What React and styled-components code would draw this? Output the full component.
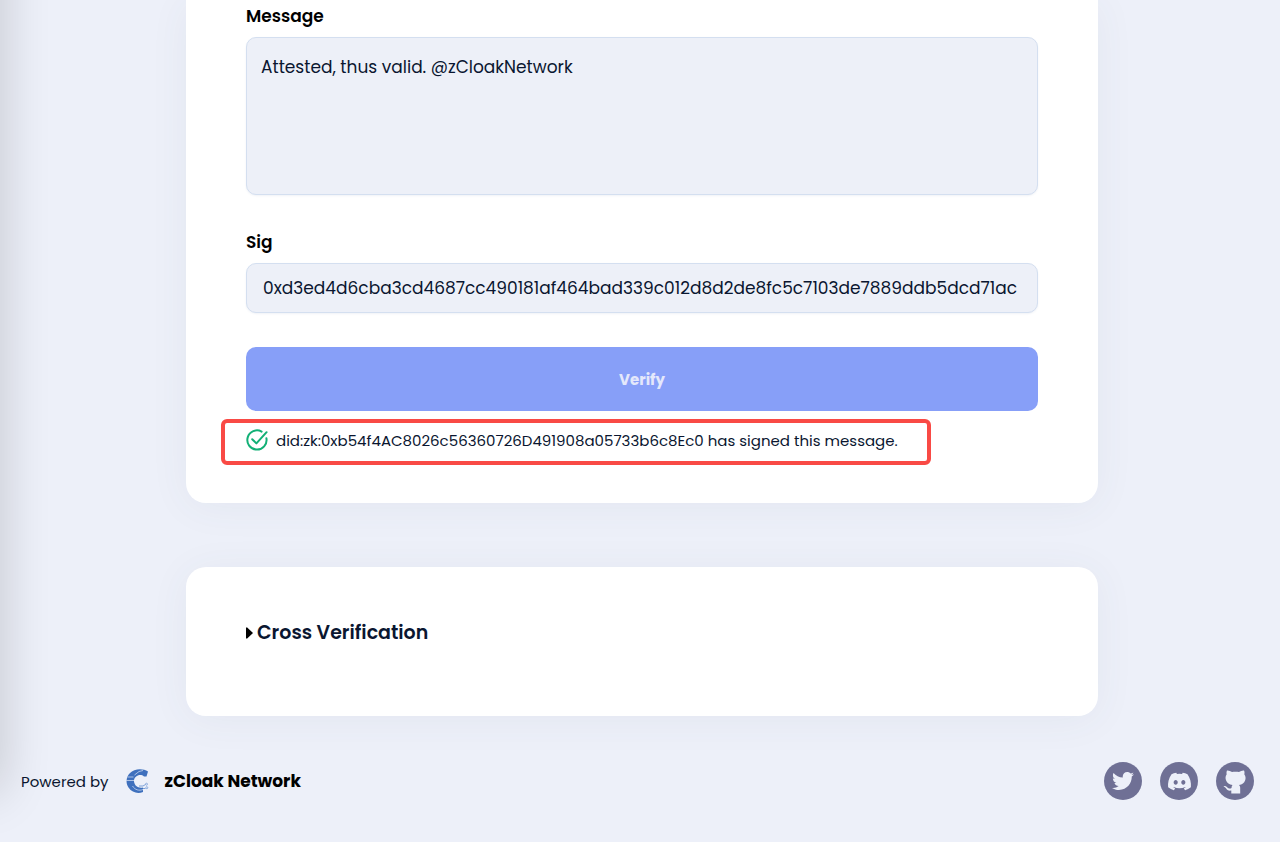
import React from "react";
import styled, { createGlobalStyle } from "styled-components";
import { FaTwitter, FaDiscord } from "react-icons/fa";

const GlobalStyle = createGlobalStyle`
  *, *::before, *::after { box-sizing: border-box; }
  body {
    margin: 0;
    background: #edf0f9;
    color: #0a1630;
    font-family: Poppins, Inter, "Liberation Sans", sans-serif;
    font-size: 16px;
  }
`;

const Page = styled.div`
  position: relative;
  overflow: hidden;
`;

const DrawerShadow = styled.div`
  position: absolute;
  left: -40px;
  top: -60px;
  bottom: 50px;
  width: 40px;
  box-shadow: 0 0 50px rgba(0, 0, 0, 0.2);
`;

const Main = styled.main`
  display: flex;
  flex-direction: column;
  gap: 64px;
  padding: 0 182px 0 186px;
`;

const Card = styled.section`
  background: #fff;
  border-radius: ${(p) => (p.$continued ? "0 0 20px 20px" : "20px")};
  padding: ${(p) => (p.$continued ? "1px 60px 38px" : "51px 60px 68px")};
  box-shadow: 0 4px 40px rgba(60, 80, 110, 0.06);
`;

const Field = styled.div`
  display: flex;
  flex-direction: column;
  margin-bottom: ${(p) => (p.$last ? "34px" : "32px")};
`;

const Label = styled.label`
  color: #000;
  font-size: 17px;
  font-weight: 600;
  line-height: 30px;
  margin-bottom: 6px;
`;

const fieldStyle = `
  width: 100%;
  background: #edf0f8;
  color: #0a1630;
  border: 1px solid #d4dff0;
  border-radius: 10px;
  box-shadow: 0 1px 2px rgba(60, 90, 150, 0.08);
  font-family: inherit;
  font-size: 17px;
  outline: none;
`;

const TextArea = styled.textarea`
  ${fieldStyle}
  display: block;
  height: 158px;
  padding: 16px 14px;
  line-height: 26px;
  resize: none;
`;

const TextInput = styled.input`
  ${fieldStyle}
  height: 50px;
  padding: 0 16px;
`;

const VerifyButton = styled.button`
  display: block;
  width: 100%;
  height: 64px;
  border: 0;
  border-radius: 10px;
  background: #879ff8;
  color: #e4e8fb;
  font-family: inherit;
  font-size: 15px;
  font-weight: 700;
`;

const Result = styled.p`
  display: flex;
  align-items: center;
  gap: 8px;
  width: 710px;
  max-width: calc(100% + 50px);
  height: 46px;
  margin: 8px 0 0 -25px;
  padding: 0 20px 4px 21px;
  border: 4px solid #f94a45;
  border-radius: 6px;
  font-size: 15px;
  white-space: nowrap;
`;

const Summary = styled.summary`
  display: flex;
  align-items: center;
  gap: 4px;
  font-size: 19px;
  font-weight: 600;
  line-height: 30px;
  list-style: none;
  &::-webkit-details-marker { display: none; }
`;

const Footer = styled.footer`
  display: flex;
  align-items: center;
  justify-content: space-between;
  padding: 46px 26px 42px 21px;
`;

const Powered = styled.div`
  display: flex;
  align-items: center;
  gap: 17px;
  font-size: 15px;
`;

const Brand = styled.a`
  display: flex;
  align-items: center;
  gap: 16px;
  color: #000;
  font-size: 17px;
  font-weight: 700;
  text-decoration: none;
`;

const Socials = styled.nav`
  display: flex;
  gap: 18px;
`;

const SocialLink = styled.a`
  display: flex;
  align-items: center;
  justify-content: center;
  width: 38px;
  height: 38px;
  border-radius: 50%;
  background: #6f7095;
  color: #edf0f9;
`;

const CheckIcon = () => (
  <svg width="22" height="22" viewBox="0 0 22 22" fill="none" stroke="#12b076" strokeWidth="2" strokeLinecap="round" strokeLinejoin="round" aria-hidden="true">
    <path d="M15.6 2.6A9.6 9.6 0 1 0 20.4 9.3" />
    <path d="M6.2 10.2l4.2 4.2L20.6 3.2" />
  </svg>
);

const ZCloakLogo = () => (
  <svg width="23" height="24" viewBox="0 0 23 24" fill="none" aria-hidden="true">
    <path d="M22 2.500C17 -1 8 -0.500 4 4C0 8 -0.500 14 2.500 18.500C6 23.800 12 25 17 23V18.500C12.500 19.500 8.500 17 8 12.500C7.500 7.500 14 4 18 7.500H20.500Z" fill="#3f70bd" />
    <path d="M1.500 8H7.500M0 11.500H8M8.500 6L13 2.500L17 1.500M6.500 17C9 21 13 22 17 20.500" stroke="#c9d7f0" strokeWidth="0.8" />
    <path d="M13 17H17L19.500 15.500M17 19.500H19.500" stroke="#7ba0d8" strokeWidth="1" />
    <circle cx="20.500" cy="15.200" r="1" stroke="#7ba0d8" strokeWidth="0.800" />
    <circle cx="20.800" cy="18.700" r="1" stroke="#7ba0d8" strokeWidth="0.800" />
  </svg>
);

const OctocatIcon = () => (
  <svg width="24" height="26" viewBox="0 0 24 26" fill="currentColor" aria-hidden="true">
    <path d="M4 2.500C5.500 2.200 7.500 3.100 9 4C11 3.500 14 3.500 16 4C17.500 3.100 19.500 2.200 21 2.500C21.700 4 21.600 5.200 21.300 6.200C24 9.500 22.500 16.200 16 17C17 18 17.200 19 17.200 20V25.500H8.300V22.500C5.500 23 4 22 3 20.300C2.500 19.300 1.500 18.800 0.500 18.200C3.500 17.400 4.500 20.300 6 20.500C7 20.600 8 20.400 8.500 20C8.600 18.800 8.800 17.800 9.500 17C3 16.200 1 9.500 3.700 6.200C3.400 5.200 3.400 4 4 2.500Z" />
  </svg>
);

export default function App() {
  return (
    <Page>
      <GlobalStyle />
      <DrawerShadow />
      <Main>
        <Card $continued>
          <Field>
            <Label htmlFor="message">Message</Label>
            <TextArea id="message" defaultValue="Attested, thus valid. @zCloakNetwork" />
          </Field>
          <Field $last>
            <Label htmlFor="sig">Sig</Label>
            <TextInput id="sig" defaultValue="0xd3ed4d6cba3cd4687cc490181af464bad339c012d8d2de8fc5c7103de7889ddb5dcd71ac" />
          </Field>
          <VerifyButton type="button">Verify</VerifyButton>
          <Result role="status">
            <CheckIcon />
            did:zk:0xb54f4AC8026c56360726D491908a05733b6c8Ec0 has signed this message.
          </Result>
        </Card>
        <Card>
          <details>
            <Summary>
              <svg width="7" height="12" viewBox="0 0 7 12" aria-hidden="true">
                <path d="M0 0.500H1.200L7 6L1.200 11.500H0Z" fill="#000" />
              </svg>
              Cross Verification
            </Summary>
          </details>
        </Card>
      </Main>
      <Footer>
        <Powered>
          Powered by
          <Brand href="#">
            <ZCloakLogo />
            zCloak Network
          </Brand>
        </Powered>
        <Socials aria-label="Social links">
          <SocialLink href="#" aria-label="Twitter"><FaTwitter size={22} /></SocialLink>
          <SocialLink href="#" aria-label="Discord"><FaDiscord size={25} /></SocialLink>
          <SocialLink href="#" aria-label="GitHub"><OctocatIcon /></SocialLink>
        </Socials>
      </Footer>
    </Page>
  );
}
